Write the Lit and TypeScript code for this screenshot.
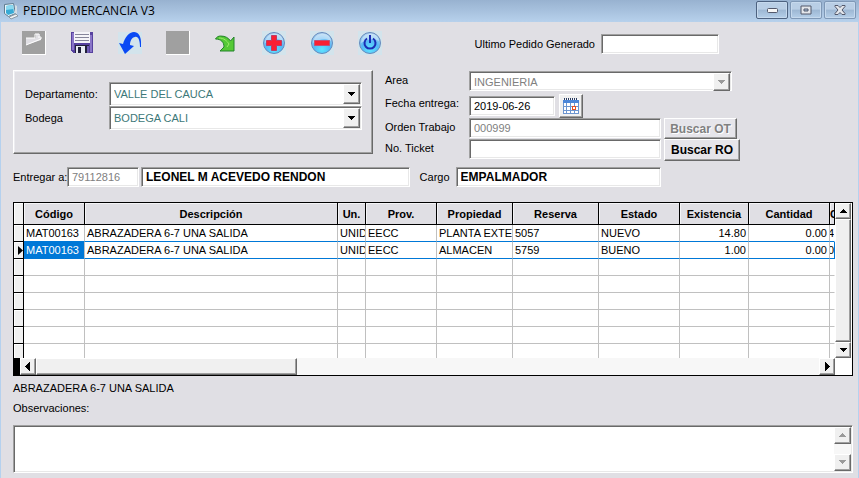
import { LitElement, html, css, svg } from "lit";
import { customElement, property } from "lit/decorators.js";
import { classMap } from "lit/directives/class-map.js";

const base = css`
  * { box-sizing: border-box; }
  button, input, select, textarea { font: inherit; color: inherit; margin: 0; border-radius: 0; outline: none; }
  svg { display: block; flex: none; }
  .raised {
    display: flex; align-items: center; justify-content: center; padding: 0;
    background: #f0f0f0; border: 1px solid; border-color: #fff #696969 #696969 #fff;
    box-shadow: inset -1px -1px #a0a0a0;
  }
  .sunken {
    background: #fff; border: 1px solid; border-color: #a0a0a0 #fff #fff #a0a0a0;
    box-shadow: inset 1px 1px #696969, inset -1px -1px #e8e8e8;
  }
`;

const arrows: Record<string, string> = {
  up: "M4 0h1v1h1v1h1v1h1v1H1V3h1V2h1V1h1z",
  down: "M1 2h7v1H7v1H6v1H5v1H4V5H3V4H2V3H1z",
  left: "M6 0v9H5V8H4V7H3V6H2V5H1V4h1V3h1V2h1V1h1V0z",
  right: "M2 0v9h1V8h1V7h1V6h1V5h1V4H6V3H5V2H4V1H3V0z",
};

const arrow = (dir: string, disabled = false) => svg`
  <svg width="9" height="9" viewBox="0 0 9 9" shape-rendering="crispEdges">
    <path d=${arrows[dir]} transform=${dir === "up" ? "translate(0 2)" : "translate(0 0)"}
      fill=${disabled ? "#9a9a9a" : "#000"}></path>
  </svg>`;

const toolIcons = [
  { label: "Nuevo", off: true, art: svg`<path fill="#a0a0a0" d="M0 0h24v24H0z"/><path d="M24 0v24H0" fill="none" stroke="#fff" stroke-width="2"/><path d="M4 7h10V3h4v4h1v2L4 14z" fill="#e0dfe4"/><path d="M4 7h9V3h4M4 14l15-6V6h-3" fill="none" stroke="#fff"/>` },
  { label: "Guardar", off: false, art: svg`<g shape-rendering="crispEdges"><path fill="#57429f" d="M1 1h22v21H3l-2-2z"/><path fill="#8a76c8" d="M2 2h2v17H2zM20 4h2v17h-2z"/><path fill="#f4f4f8" d="M4 1h16v11H4z"/><path fill="#85859a" d="M5 3h14v1H5zM5 6h14v1H5zM5 9h14v1H5z"/><path fill="#22213b" d="M5 14h14v8H5z"/><path fill="#e9edf3" d="M6 15h9v7H6z"/><path fill="#22213b" d="M8 16h3v6H8z"/><path fill="#6f5cb4" d="M17 15h2v7h-2z"/></g>` },
  { label: "Deshacer", off: false, art: svg`<path fill="#d3e4ec" d="M0 1h24v22H0z"/><path fill="#0a48f4" d="M1 12l4 1C7 6 11 1 16 1c4 0 7 4 7 10v5h-1c0-7-2-11-5-10-3 0-5 4-5 8l4 1-9 8z"/>` },
  { label: "Borrar", off: true, art: svg`<path fill="#a0a0a0" d="M0 0h24v24H0z"/><path d="M24 0v24H0" fill="none" stroke="#fff" stroke-width="2"/>` },
  { label: "Importar", off: false, art: svg`<path fill="#55c936" stroke="#23832b" d="M1.500 8c1-2 3-3 5-3 5 0 8 2 10 5l3.500-4v14H6l4-4c0-5-3-8-8.500-8z"/><path d="M5 7c5 0 8 3 10 6l-2 3" fill="none" stroke="#9ce96a" stroke-width="1"/>` },
  { label: "Agregar", off: false, art: svg`<path fill="#d3e4ec" d="M0 0h24v24H0z"/><circle cx="12" cy="12" r="10.500" fill="url(#orb)" stroke="#668abd"/><path d="M3 12c1-12 17-12 18-2-5-3-12-2-18 2z" fill="#fff" opacity=".4"/><path d="M9.500 4.500h5v5h5v5h-5v5h-5v-5h-5v-5h5z" fill="#fa2032" stroke="#bf3b65"/>` },
  { label: "Quitar", off: false, art: svg`<path fill="#d3e4ec" d="M0 0h24v24H0z"/><circle cx="12" cy="12" r="10.500" fill="url(#orb)" stroke="#668abd"/><path d="M3 12c1-12 17-12 18-2-5-3-12-2-18 2z" fill="#fff" opacity=".4"/><path d="M4.500 9.500h15v5h-15z" fill="#fa2032" stroke="#bf5277"/>` },
  { label: "Salir", off: false, art: svg`<path fill="#d3e4ec" d="M0 0h24v24H0z"/><circle cx="12" cy="12" r="10.500" fill="url(#orb)" stroke="#668abd"/><path d="M3 12c1-12 17-12 18-2-5-3-12-2-18 2z" fill="#fff" opacity=".4"/><path d="M9 7.500a5.500 5.500 0 1 0 6 0M12 4v8" fill="none" stroke="#1c2eb5" stroke-width="2"/>` },
];

const columns = [
  ["codigo", "Código"], ["desc", "Descripción"], ["un", "Un."], ["prov", "Prov."], ["prop", "Propiedad"],
  ["reserva", "Reserva"], ["estado", "Estado"], ["exist", "Existencia"], ["cant", "Cantidad"], ["last", "C"],
];
const rows = [
  ["MAT00163", "ABRAZADERA 6-7 UNA SALIDA", "UNIDAD", "EECC", "PLANTA EXTERNA", "5057", "NUEVO", "14.80", "0.00", "4"],
  ["MAT00163", "ABRAZADERA 6-7 UNA SALIDA", "UNIDAD", "EECC", "ALMACEN", "5759", "BUENO", "1.00", "0.00", "0"],
];

@customElement("tool-bar")
export class ToolBar extends LitElement {
  static styles = [base, css`
    :host { display: flex; gap: 24px; }
    .tool { border: 0; background: none; padding: 0; width: 24px; height: 24px; }
  `];
  render() {
    return toolIcons.map((t) => html`
      <button class="tool" aria-label=${t.label} ?disabled=${t.off}>
        <svg width="24" height="24" viewBox="0 0 24 24">
          <defs><radialGradient id="orb" cx=".5" cy=".8" r=".8">
            <stop offset="0" stop-color="#5fe6ff"/><stop offset=".5" stop-color="#55b7f6"/><stop offset="1" stop-color="#b6d3ee"/>
          </radialGradient></defs>
          ${t.art}
        </svg>
      </button>`);
  }
}

@customElement("combo-box")
export class ComboBox extends LitElement {
  @property() value = "";
  @property() label = "";
  @property({ type: Boolean }) disabled = false;
  static styles = [base, css`
    :host { display: block; min-width: 0; }
    .box { display: grid; height: 100%; padding: 1px; }
    .select { grid-area: 1 / 1; appearance: none; width: 100%; border: 0; background: none; padding: 0 20px 0 3px; color: #3c7878; opacity: 1; }
    .select:disabled { color: #808080; }
    .arrow { grid-area: 1 / 1; justify-self: end; width: 17px; pointer-events: none; }
  `];
  render() {
    return html`<div class="box sunken">
      <select class="select" aria-label=${this.label} ?disabled=${this.disabled}><option>${this.value}</option></select>
      <span class="arrow raised">${arrow("down", this.disabled)}</span>
    </div>`;
  }
}

@customElement("item-grid")
export class ItemGrid extends LitElement {
  static styles = [base, css`
    :host { display: grid; grid-template-columns: minmax(0, 1fr) 16px 1px; border: 1px solid #000; background: #fff; }
    .view { height: 155px; overflow: hidden; }
    .table { width: 100%; table-layout: fixed; border-collapse: separate; border-spacing: 0; }
    th, td { overflow: hidden; white-space: nowrap; padding: 0; }
    th { height: 22px; background: #e0dfe4; border: solid #000; border-width: 0 1px 1px 0; box-shadow: inset 1px 1px #f4f4f6; }
    td { height: 17px; line-height: 16px; border: solid #c0c0c0; border-width: 0 1px 1px 0; padding-left: 2px; }
    .sel { width: 10px; background: #f0f0f0; border-color: #000; padding: 0; box-shadow: inset 1px 1px #fff; }
    .codigo { width: 61px; }
    .un { width: 28px; }
    .prov { width: 71px; }
    .prop { width: 76px; }
    .reserva { width: 86px; }
    .estado { width: 81px; }
    .exist { width: 69px; }
    .cant { width: 81px; }
    .last { width: 5px; }
    td.exist, td.cant { text-align: right; padding-right: 2px; }
    td.last { padding: 0; border-right-color: #fff; }
    .clip { display: flex; justify-content: flex-end; overflow: hidden; }
    .before td:not(.sel), .current td:not(.sel) { border-bottom-color: #0078d7; }
    .current td.last { border-right-color: #0078d7; }
    .current td.codigo { background: #0078d7; color: #fff; }
    .mark { display: block; margin-left: 2px; }
    .vbar { display: grid; grid-template-rows: 16px 1fr 16px; }
    .hbar { display: grid; grid-template-columns: 6px 16px 261px 1fr 16px; height: 17px; background: #f7f7f7; }
    .stub { background: #000; }
  `];
  render() {
    const blank = Array.from({ length: 6 }, () => columns.map(() => ""));
    return html`
      <div class="view"><table class="table">
        <thead><tr><th class="sel"></th>${columns.map(([k, t]) => html`<th class=${k}>${t}</th>`)}</tr></thead>
        <tbody>${[...rows, ...blank].map((r, i) => html`
          <tr class=${classMap({ before: i === 0, current: i === 1 })}>
            <td class="sel">${i === 1 ? svg`<svg class="mark" width="7" height="9" viewBox="0 0 7 9"><path d="M2 0l5 4.500L2 9z"/></svg>` : ""}</td>
            ${r.map((v, c) => html`<td class=${columns[c][0]}>${c === 9 ? html`<div class="clip">${v}</div>` : v}</td>`)}
          </tr>`)}</tbody>
      </table></div>
      <div class="vbar">
        <button class="raised" aria-label="Subir">${arrow("up")}</button>
        <div class="raised"></div>
        <button class="raised" aria-label="Bajar">${arrow("down")}</button>
      </div>
      <span></span>
      <div class="hbar">
        <span class="stub"></span>
        <button class="raised" aria-label="Izquierda">${arrow("left")}</button>
        <div class="raised"></div>
        <span></span>
        <button class="raised" aria-label="Derecha">${arrow("right")}</button>
      </div>`;
  }
}

@customElement("app-root")
export class AppRoot extends LitElement {
  static styles = [base, css`
    :host {
      display: flex; flex-direction: column; box-sizing: border-box; min-height: 100vh;
      background: #e0dfe4; color: #000; border: solid #b5d1ee; border-width: 0 1px;
      font: 11px/16px "Liberation Sans", Arial, sans-serif;
    }
    .title {
      display: flex; align-items: center; gap: 4px; height: 22px; padding: 0 3px; margin: 0 -1px;
      background: linear-gradient(#98b2d0, #b7d1ec);
    }
    .name { flex: 1; margin: 0; font: 12px/20px "Open Sans", "Noto Sans", sans-serif; }
    .controls { display: flex; gap: 2px; align-self: flex-start; padding-top: 1px; }
    .control {
      display: grid; place-items: center; width: 32px; height: 18px; padding: 0; border: 1px solid #7f98b6; border-radius: 2px;
      background: linear-gradient(#b9cee5 45%, #9db7d3 50%, #b5cfe9); box-shadow: inset 0 0 0 1px #c6d9ed;
    }
    .control.first { border-color: #4d6280; }
    .body { flex: 1; display: flex; flex-direction: column; padding: 9px 5px 5px 12px; }
    .top { display: flex; justify-content: space-between; padding: 0 134px 0 9px; }
    .last-order { display: flex; align-items: center; gap: 6px; height: 26px; }
    .w118 { width: 118px; }
    .field { height: 20px; padding: 0 4px; min-width: 0; }
    .field:disabled { color: #808080; }
    .strong { font-weight: bold; font-size: 12px; }
    .form { display: grid; grid-template-columns: minmax(0, 360fr) minmax(0, 468fr); gap: 12px; margin-top: 13px; }
    .panel {
      display: grid; grid-template-columns: 84px minmax(0, 1fr); grid-template-rows: 24px 24px; align-items: center;
      height: 84px; padding: 11px 10px 0 11px; border: 1px solid; border-color: #fff #696969 #696969 #fff;
      box-shadow: inset -1px -1px #a0a0a0, inset 1px 1px #ececf0;
    }
    .combo { height: 24px; }
    .details { display: grid; grid-template-columns: 84px minmax(0, 192fr) minmax(0, 192fr); grid-template-rows: 23px 24px 21px 22px; align-items: start; line-height: 18px; padding-top: 1px; }
    .area { grid-column: 2 / 4; height: 20px; margin-right: 121px; }
    .date { display: flex; gap: 4px; grid-column: 2 / 4; align-items: center; }
    .w86 { width: 86px; }
    .cal { width: 24px; height: 24px; }
    .search { width: 73px; height: 21px; margin-left: 3px; font-weight: bold; font-size: 12px; background: #e6e5ea; }
    .search:disabled { color: #808080; text-shadow: 1px 1px #fff; }
    .main { width: 76px; height: 22px; }
    .person { display: flex; align-items: center; padding-right: 192px; margin-top: 6px; }
    .lab { width: 54px; white-space: nowrap; }
    .w72 { width: 72px; margin-right: 2px; }
    .who { flex: 270; }
    .cargo { width: 46px; padding-left: 10px; }
    .job { flex: 204; }
    .items { margin-top: 15px; }
    .note { margin: 4px 0; }
    .notes { display: grid; grid-template-columns: minmax(0, 1fr) 17px; height: 48px; padding: 1px; margin-top: 9px; }
    .text { border: 0; resize: none; padding: 2px; background: none; overflow: hidden; }
    .bar { display: flex; flex-direction: column; justify-content: space-between; background: #f7f7f7; }
    .step { height: 17px; }
  `];
  render() {
    return html`
      <header class="title">
        <svg width="16" height="18" viewBox="0 0 16 18">
          <path d="M1.500 2.500l9-1 2 10-7 3-4-3z" fill="#e9f5fa" stroke="#607d91"/><path d="M3 4l7-1 1 8-6 2-2-2z" fill="#37aad5"/>
          <path d="M3 4l7-1 .5 4L3 8z" fill="#8bd9f0"/><path d="M6 15l7-3 2 2-7 3z" fill="#eef1f3" stroke="#8a99a4"/><path d="M12 3l2 1v8l-2-1z" fill="#d3dde4"/>
        </svg>
        <h1 class="name">PEDIDO MERCANCIA V3</h1>
        <div class="controls">
          <button class="control first" aria-label="Minimizar"><svg width="13" height="7" viewBox="0 0 13 7"><rect x="1.500" y="1.500" width="10" height="4" rx="1" fill="#f6f6f6" stroke="#53586b"/></svg></button>
          <button class="control" aria-label="Maximizar"><svg width="12" height="10" viewBox="0 0 12 10"><path fill-rule="evenodd" d="M1 1h10v8H1zM4 4h4v2H4z" fill="#e3e6eb" stroke="#53586b"/></svg></button>
          <button class="control" aria-label="Cerrar"><svg width="12" height="10" viewBox="0 0 12 10"><path d="M1 .5h3l2 2 2-2h3v1L8 5l3 3.500v1H8l-2-2-2 2H1v-1L4 5 1 1.500z" fill="#e3e6eb" stroke="#53586b"/></svg></button>
        </div>
      </header>
      <main class="body">
        <div class="top">
          <tool-bar></tool-bar>
          <div class="last-order"><label for="last">Ultimo Pedido Generado</label><input id="last" class="field sunken w118" /></div>
        </div>
        <div class="form">
          <section class="panel">
            <span>Departamento:</span><combo-box class="combo" label="Departamento" value="VALLE DEL CAUCA"></combo-box>
            <span>Bodega</span><combo-box class="combo" label="Bodega" value="BODEGA CALI"></combo-box>
          </section>
          <section class="details">
            <span>Area</span><combo-box class="area" label="Area" value="INGENIERIA" disabled></combo-box>
            <label for="date">Fecha entrega:</label>
            <div class="date">
              <input id="date" class="field sunken w86" .value=${"2019-06-26"} />
              <button class="raised cal" aria-label="Calendario">
                <svg width="16" height="16" viewBox="0 0 16 16" shape-rendering="crispEdges">
                  <path fill="#fff" d="M0 1h16v15H0z"/><path fill="#4b86d8" d="M0 2h16v3H0z"/>
                  <path d="M1 1h14" stroke="#2b3c63" stroke-width="2" stroke-dasharray="1 1"/>
                  <path d="M.5 5v10.500h15V5M0 8.500h16M0 12.500h16M3.500 5v11M7.500 5v11M11.500 5v11" fill="none" stroke="#6c95cf"/>
                  <path d="M9.500 8.500h3v3h-3z" fill="#fff" stroke="#e8501e" stroke-width="1"/>
                </svg>
              </button>
            </div>
            <label for="order">Orden Trabajo</label><input id="order" class="field sunken" .value=${"000999"} disabled />
            <button class="raised search" disabled>Buscar OT</button>
            <label for="ticket">No. Ticket</label><input id="ticket" class="field sunken" />
            <button class="raised search main">Buscar RO</button>
          </section>
        </div>
        <div class="person">
          <label class="lab" for="id">Entregar a:</label><input id="id" class="field sunken w72" .value=${"79112816"} disabled />
          <input aria-label="Nombre" class="field sunken strong who" .value=${"LEONEL M ACEVEDO RENDON"} />
          <label class="cargo" for="job">Cargo</label><input id="job" class="field sunken strong job" .value=${"EMPALMADOR"} />
        </div>
        <item-grid class="items"></item-grid>
        <p class="note">ABRAZADERA 6-7 UNA SALIDA</p>
        <label for="notes">Observaciones:</label>
        <div class="notes sunken">
          <textarea id="notes" class="text"></textarea>
          <div class="bar">
            <button class="raised step" aria-label="Subir" disabled>${arrow("up", true)}</button>
            <button class="raised step" aria-label="Bajar" disabled>${arrow("down", true)}</button>
          </div>
        </div>
      </main>`;
  }
}
